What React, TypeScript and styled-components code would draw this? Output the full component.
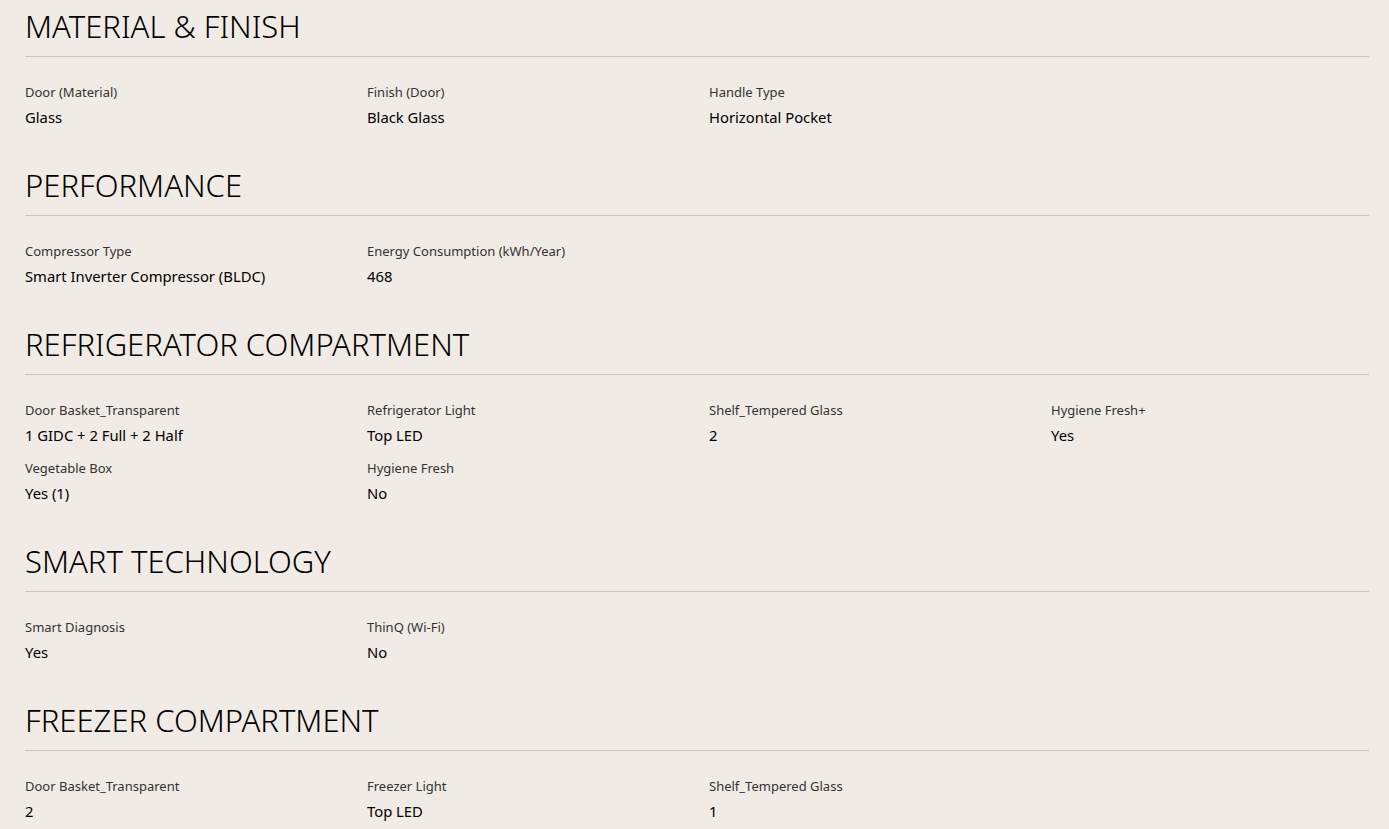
import React from "react";
import styled, { createGlobalStyle } from "styled-components";

const Global = createGlobalStyle`
  html, body { margin: 0; padding: 0; background: #f0ebe4; }
  body { font-family: "Noto Sans", "Open Sans", sans-serif; color: #000; }
`;

const Page = styled.main`
  padding: 6px 20px 0 25px;
  display: flex;
  flex-direction: column;
  gap: 37px;
`;

const Section = styled.section`
  display: flex;
  flex-direction: column;
`;

const Heading = styled.h2`
  margin: 0;
  font-size: 31px;
  line-height: 40px;
  font-weight: 350;
  padding-bottom: 10px;
  border-bottom: 1px solid #c9c6c1;
  color: #000;
`;

const Grid = styled.div`
  margin-top: 25px;
  display: grid;
  grid-template-columns: repeat(4, 318px);
  column-gap: 24px;
  row-gap: 12px;
`;

const Item = styled.div`
  display: flex;
  flex-direction: column;
`;

const Label = styled.span`
  font-size: 13px;
  line-height: 20px;
  color: #333;
`;

const Value = styled.span`
  margin-top: 4px;
  font-size: 14.8px;
  line-height: 22px;
  font-weight: 400;
  color: #000;
`;

const data: { title: string; items: [string, string][] }[] = [
  {
    title: "MATERIAL & FINISH",
    items: [
      ["Door (Material)", "Glass"],
      ["Finish (Door)", "Black Glass"],
      ["Handle Type", "Horizontal Pocket"],
    ],
  },
  {
    title: "PERFORMANCE",
    items: [
      ["Compressor Type", "Smart Inverter Compressor (BLDC)"],
      ["Energy Consumption (kWh/Year)", "468"],
    ],
  },
  {
    title: "REFRIGERATOR COMPARTMENT",
    items: [
      ["Door Basket_Transparent", "1 GIDC + 2 Full + 2 Half"],
      ["Refrigerator Light", "Top LED"],
      ["Shelf_Tempered Glass", "2"],
      ["Hygiene Fresh+", "Yes"],
      ["Vegetable Box", "Yes (1)"],
      ["Hygiene Fresh", "No"],
    ],
  },
  {
    title: "SMART TECHNOLOGY",
    items: [
      ["Smart Diagnosis", "Yes"],
      ["ThinQ (Wi-Fi)", "No"],
    ],
  },
  {
    title: "FREEZER COMPARTMENT",
    items: [
      ["Door Basket_Transparent", "2"],
      ["Freezer Light", "Top LED"],
      ["Shelf_Tempered Glass", "1"],
    ],
  },
];

export default function App() {
  return (
    <>
      <Global />
      <Page>
        {data.map((s) => (
          <Section key={s.title}>
            <Heading>{s.title}</Heading>
            <Grid>
              {s.items.map(([l, v], i) => (
                <Item key={i}>
                  <Label>{l}</Label>
                  <Value>{v}</Value>
                </Item>
              ))}
            </Grid>
          </Section>
        ))}
      </Page>
    </>
  );
}
